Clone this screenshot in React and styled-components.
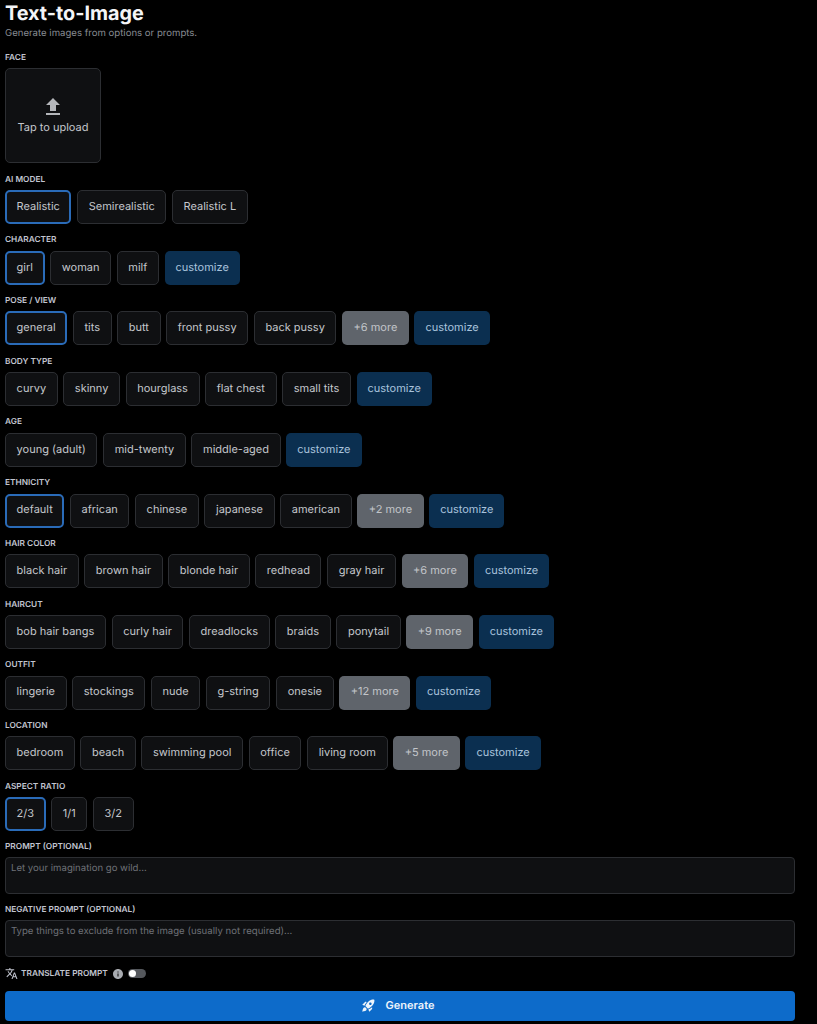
import React from "react";
import styled, { createGlobalStyle } from "styled-components";
import { MdFileUpload, MdTranslate, MdInfo, MdRocketLaunch } from "react-icons/md";

const GlobalStyle = createGlobalStyle`
  html, body {
    margin: 0;
    background: #000;
    font-family: "Inter", "Liberation Sans", sans-serif;
    text-rendering: geometricPrecision;
    overflow: hidden;
  }
  button, textarea {
    text-rendering: geometricPrecision;
  }
`;

const Page = styled.div`
  width: 817px;
  height: 1024px;
  box-sizing: border-box;
  padding: 0 22px 0 5px;
  overflow: hidden;
`;

const Title = styled.h1`
  margin: 0;
  font-size: 19.8px;
  line-height: 26px;
  font-weight: 700;
  color: #f4f5f7;
`;

const Subtitle = styled.p`
  margin: 0 0 11.5px;
  font-size: 9.6px;
  line-height: 15px;
  color: #878b92;
`;

const Section = styled.section`
  margin-bottom: ${(p) => (p.$tight ? "10.6px" : "11.3px")};
`;

const FaceSection = styled(Section)`
  margin-bottom: 11.8px;
`;

const Label = styled.div`
  font-size: 8.3px;
  line-height: 11px;
  font-weight: 600;
  text-transform: uppercase;
  color: #c2c5d0;
  margin-bottom: 4.4px;
`;

const Row = styled.div`
  display: flex;
  gap: 5.6px;
`;

const chipPadding = { active: "9.6px", custom: "10px", more: "10.5px" };

const Chip = styled.button`
  height: 34px;
  box-sizing: border-box;
  padding: 0 ${(p) => chipPadding[p.$kind] || "10.6px"} 1.5px;
  border-radius: 5px;
  font: 400 11px/1 "Inter", "Liberation Sans", sans-serif;
  white-space: nowrap;
  color: ${(p) => (p.$kind === "custom" ? "#a9c3dd" : p.$kind === "more" ? "#c2c5c9" : "#c4c7cc")};
  background: ${(p) =>
    p.$kind === "custom" ? "#0b2f50" : p.$kind === "more" ? "#5f646b" : "#0f1012"};
  border: ${(p) =>
    p.$kind === "active"
      ? "2px solid #2a6bb8"
      : p.$kind === "custom" || p.$kind === "more"
        ? "1px solid transparent"
        : "1px solid #2c2e32"};
`;

const Upload = styled.div`
  width: 96px;
  height: 95px;
  box-sizing: border-box;
  padding-bottom: 2px;
  border: 1px solid #2c2e32;
  border-radius: 5px;
  background: #0f1012;
  color: #c4c7cc;
  font-size: 11px;
  display: flex;
  flex-direction: column;
  align-items: center;
  justify-content: center;
  gap: 1px;
  svg {
    font-size: 24px;
    color: #b4b6ba;
  }
`;

const TextBox = styled.textarea`
  display: block;
  width: 100%;
  height: 37px;
  box-sizing: border-box;
  padding: 4px 5px;
  resize: none;
  outline: none;
  border: 1px solid #2c2e32;
  border-radius: 4px;
  background: #0f1012;
  color: #c4c7cc;
  font: 400 9.6px/14px "Inter", "Liberation Sans", sans-serif;
  &::placeholder {
    color: #6e7177;
    opacity: 1;
  }
`;

const TranslateRow = styled.div`
  display: flex;
  align-items: center;
  height: 14px;
  margin: -1px 0 10px;
  color: #c2c5d0;
  font-size: 8.3px;
  font-weight: 600;
  svg {
    flex: none;
  }
`;

const TranslateText = styled.span`
  margin: 0 4px 0 3px;
`;

const Toggle = styled.span`
  position: relative;
  width: 18px;
  height: 9px;
  margin-left: 4px;
  border-radius: 5px;
  background: #55585d;
  &::before {
    content: "";
    position: absolute;
    top: 1px;
    left: 1px;
    width: 7px;
    height: 7px;
    border-radius: 50%;
    background: #fff;
  }
`;

const Generate = styled.button`
  width: 100%;
  height: 30px;
  display: flex;
  align-items: center;
  justify-content: center;
  gap: 10px;
  padding: 0 5px 0 0;
  border: 0;
  border-radius: 4px;
  background: #0d6bca;
  color: #eef4fb;
  font: 600 11px/1 "Inter", "Liberation Sans", sans-serif;
  svg {
    font-size: 15px;
  }
`;

const groups = [
  { label: "AI Model", active: "Realistic", items: ["Semirealistic", "Realistic L"] },
  { label: "Character", active: "girl", items: ["woman", "milf"], custom: true },
  { label: "Pose / View", active: "general", items: ["tits", "butt", "front pussy", "back pussy"], more: "+6 more", custom: true },
  { label: "Body Type", items: ["curvy", "skinny", "hourglass", "flat chest", "small tits"], custom: true },
  { label: "Age", items: ["young (adult)", "mid-twenty", "middle-aged"], custom: true },
  { label: "Ethnicity", active: "default", items: ["african", "chinese", "japanese", "american"], more: "+2 more", custom: true },
  { label: "Hair Color", items: ["black hair", "brown hair", "blonde hair", "redhead", "gray hair"], more: "+6 more", custom: true },
  { label: "Haircut", items: ["bob hair bangs", "curly hair", "dreadlocks", "braids", "ponytail"], more: "+9 more", custom: true },
  { label: "Outfit", items: ["lingerie", "stockings", "nude", "g-string", "onesie"], more: "+12 more", custom: true },
  { label: "Location", items: ["bedroom", "beach", "swimming pool", "office", "living room"], more: "+5 more", custom: true },
  { label: "Aspect Ratio", active: "2/3", items: ["1/1", "3/2"], tight: true },
];

export default function App() {
  return (
    <Page>
      <GlobalStyle />
      <Title>Text-to-Image</Title>
      <Subtitle>Generate images from options or prompts.</Subtitle>
      <FaceSection>
        <Label>Face</Label>
        <Upload>
          <MdFileUpload />
          Tap to upload
        </Upload>
      </FaceSection>
      {groups.map((g) => (
        <Section key={g.label} $tight={g.tight}>
          <Label>{g.label}</Label>
          <Row>
            {g.active && <Chip $kind="active">{g.active}</Chip>}
            {g.items.map((item) => (
              <Chip key={item}>{item}</Chip>
            ))}
            {g.more && <Chip $kind="more">{g.more}</Chip>}
            {g.custom && <Chip $kind="custom">customize</Chip>}
          </Row>
        </Section>
      ))}
      <Section $tight>
        <Label>Prompt (optional)</Label>
        <TextBox placeholder="Let your imagination go wild..." />
      </Section>
      <Section $tight>
        <Label>Negative prompt (optional)</Label>
        <TextBox placeholder="Type things to exclude from the image (usually not required)..." />
      </Section>
      <TranslateRow>
        <MdTranslate size={13} />
        <TranslateText>TRANSLATE PROMPT</TranslateText>
        <MdInfo size={12} color="#a8abb0" />
        <Toggle />
      </TranslateRow>
      <Generate>
        <MdRocketLaunch />
        Generate
      </Generate>
    </Page>
  );
}
